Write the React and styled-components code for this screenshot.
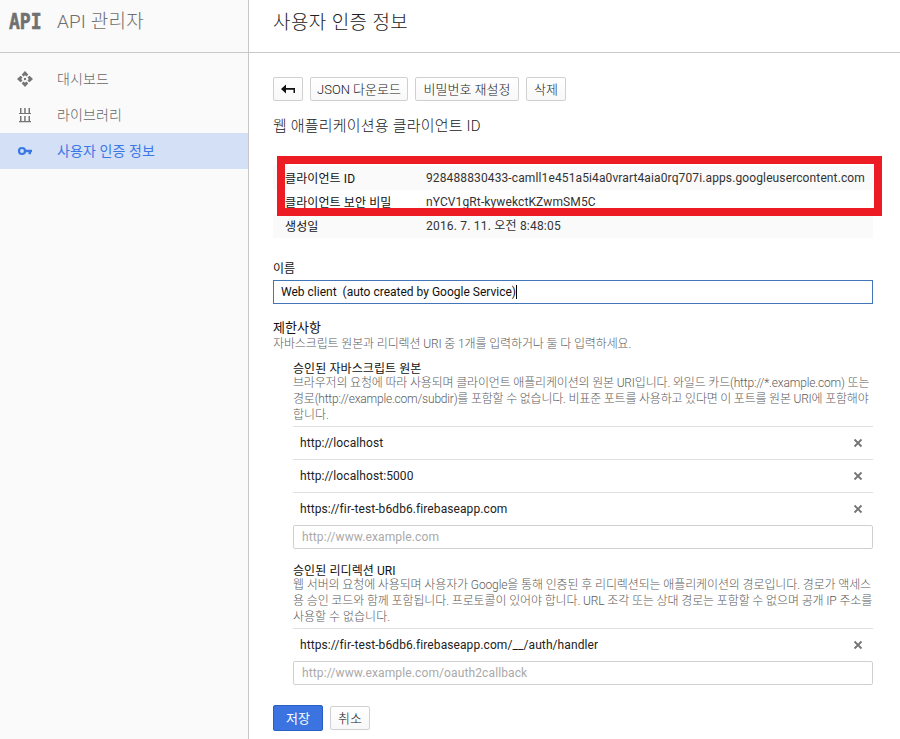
import React from 'react'
import styled, { createGlobalStyle } from 'styled-components'

const GlobalStyle = createGlobalStyle`
    * {
        box-sizing: border-box;
    }

    body {
        margin: 0;
        background: #fff;
        color: #212121;
        font-family: Roboto, "Noto Sans CJK KR", sans-serif;
        font-size: 12px;
        line-height: 16px;
        overflow: hidden;
    }
`

const Page = styled.div`
    display: flex;
    width: 900px;
    height: 739px;
`

const Sidebar = styled.div`
    width: 249px;
    flex: none;
    background: #fafafa;
    border-right: 1px solid #c8c8c8;
`

const Brand = styled.div`
    display: flex;
    align-items: center;
    height: 53px;
    padding: 0 0 8px 9px;
    border-bottom: 1px solid #c8c8c8;
`

const Logo = styled.span`
    width: 48px;
    font: bold 22px/22px "DejaVu Sans Mono", monospace;
    color: #707070;
    -webkit-text-stroke: 0.6px #707070;

    span {
        display: inline-block;
        transform: scaleX(0.82);
        transform-origin: left;
    }
`

const BrandName = styled.span`
    font-size: 19px;
    font-weight: 300;
    color: #6e6e6e;
    letter-spacing: 0.15px;
`

const Nav = styled.nav`
    padding-top: 8px;
`

const NavItem = styled.div`
    display: flex;
    align-items: center;
    height: 36px;
    padding-left: 16px;
    background: ${({ active }) => (active ? '#d3e0f6' : 'transparent')};
    color: ${({ active }) => (active ? '#3b78e7' : '#666')};
    font-size: 14px;
    font-weight: ${({ active }) => (active ? 400 : 300)};
    letter-spacing: 0.1px;

    svg {
        width: 18px;
        height: 18px;
        margin-right: 23px;
    }

    span {
        padding-bottom: 1px;
    }
`

const Main = styled.div`
    flex: 1;
    min-width: 0;
`

const Header = styled.div`
    display: flex;
    align-items: center;
    height: 53px;
    padding: 0 0 7px 24px;
    border-bottom: 1px solid #c8c8c8;
    font-size: 19px;
    font-weight: 300;
    letter-spacing: 0.4px;
`

const Content = styled.div`
    padding: 24px 27px 0 24px;
`

const Toolbar = styled.div`
    display: flex;
    align-items: center;
    gap: 7px;
`

const Button = styled.button`
    display: flex;
    align-items: center;
    justify-content: center;
    width: ${({ width }) => width}px;
    height: ${({ primary }) => (primary ? 26 : 24)}px;
    padding: 0 0 2px;
    border: 1px solid ${({ primary }) => (primary ? '#2a5fc4' : '#d0d0d0')};
    border-radius: 2px;
    background: ${({ primary }) => (primary ? '#3b74e0' : 'linear-gradient(#fff, #f8f8f8)')};
    color: ${({ primary }) => (primary ? '#fff' : '#212121')};
    font-family: inherit;
    font-size: 13px;
    font-weight: ${({ primary }) => (primary ? 400 : 300)};
    white-space: nowrap;

    svg {
        margin-top: 2px;
    }
`

const Title = styled.h2`
    margin: 17px 0 0;
    font-size: 15px;
    font-weight: 300;
    line-height: 16px;
    letter-spacing: 0.2px;
`

const Details = styled.div`
    position: relative;
    margin-top: 32px;
`

const DetailRow = styled.div`
    display: flex;
    align-items: center;
    height: 24px;
    padding-left: 12px;
    background: #fafafa;
    color: #333;

    &:nth-child(even) {
        background: #fff;
    }
`

const DetailLabel = styled.span`
    width: 141px;
    padding-top: 1px;
    color: #111;
    letter-spacing: 0.1px;
`

const DetailValue = styled.span`
    white-space: nowrap;
    letter-spacing: ${({ track }) => track || 0}px;
`

const Highlight = styled.div`
    position: absolute;
    top: -10px;
    left: 4px;
    width: 605px;
    height: 60px;
    border: 8px solid #ed1c24;
`

const Label = styled.div`
    margin-top: ${({ top }) => top}px;
    color: #111;
    font-size: ${({ size }) => size || 12}px;
`

const GroupLabel = styled.div`
    height: 14px;
    margin-top: ${({ top }) => top}px;
    color: #111;
    line-height: 17px;
    letter-spacing: 0.08px;
`

const Field = styled.div`
    display: flex;
    align-items: center;
    height: 24px;
    margin-top: ${({ top }) => top || 0}px;
    padding-left: ${({ focused }) => (focused ? 7 : 8)}px;
    border: 1px solid ${({ focused }) => (focused ? '#4376b8' : '#d0d0d0')};
    border-radius: ${({ focused }) => (focused ? 0 : 2)}px;
    color: ${({ focused }) => (focused ? '#111' : '#a9a9a9')};
    letter-spacing: ${({ track }) => track || 0}px;
    white-space: pre;
`

const Caret = styled.span`
    width: 1px;
    height: 14px;
    background: #000;
`

const Hint = styled.div`
    color: #5c5c5c;
    font-weight: 300;
`

const Line = styled.div`
    height: 16px;
    white-space: nowrap;
    letter-spacing: ${({ track }) => track || 0}px;
`

const Group = styled.div`
    padding-left: 20px;
`

const List = styled.div`
    margin-top: 3px;
`

const UriRow = styled.div`
    display: flex;
    align-items: center;
    justify-content: space-between;
    height: 33px;
    padding: 0 10px 0 7px;
    border-top: 1px solid #e0e0e0;
    letter-spacing: 0.09px;
`

const Actions = styled.div`
    display: flex;
    align-items: center;
    gap: 7px;
    margin-top: 20px;
`

function DashboardIcon() {
    return (
        <svg viewBox="0 0 18 18" fill="#757575">
            <path d="M6 4.200L9 1l3 3.200V5L10.500 6.500 9 5.200 7.500 6.500 6 5z" />
            <path d="M13.800 6L17 9l-3.200 3H13l-1.500-1.500L12.800 9l-1.300-1.500L13 6z" />
            <path d="M12 13.800L9 17l-3-3.200V13l1.500-1.500L9 12.800l1.500-1.300L12 13z" />
            <path d="M4.200 12L1 9l3.200-3H5l1.500 1.500L5.200 9l1.300 1.500L5 12z" />
            <circle cx="9" cy="9" r="1.200" />
        </svg>
    )
}

function LibraryIcon() {
    return (
        <svg viewBox="0 0 18 18" fill="#757575">
            <path d="M3 7h12v1H3zM4 2h1.500v5H4zM8.200 2h1.500v5H8.200zM12.500 2H14v5h-1.500z" />
            <path d="M3 15h12v1.300H3zM4 10h1.500v5H4zM8.200 10h1.500v5H8.200zM12.500 10H14v5h-1.500z" />
        </svg>
    )
}

function KeyIcon() {
    return (
        <svg viewBox="0 0 18 18" fill="none" stroke="#3b78e7">
            <circle cx="6" cy="9" r="3" strokeWidth="2.200" />
            <path d="M9 9h7M13.800 9v3.200" strokeWidth="2.400" />
        </svg>
    )
}

function BackIcon() {
    return (
        <svg width="14" height="10" viewBox="0 0 14 10" fill="#111">
            <path d="M0 5l5-4.500V4h9v5h-1.500V5.700H5v3.800z" />
        </svg>
    )
}

function CloseIcon() {
    return (
        <svg width="10" height="10" viewBox="0 0 10 10" stroke="#757575" strokeWidth="1.8">
            <path d="M1.500 1.500l7 7M8.500 1.500l-7 7" />
        </svg>
    )
}

function Uri({ children }) {
    return (
        <UriRow>
            <span>{children}</span>
            <CloseIcon />
        </UriRow>
    )
}

function App() {
    return (
        <Page lang="ko">
            <GlobalStyle />
            <Sidebar>
                <Brand>
                    <Logo><span>API</span></Logo>
                    <BrandName>API 관리자</BrandName>
                </Brand>
                <Nav>
                    <NavItem><DashboardIcon /><span>대시보드</span></NavItem>
                    <NavItem><LibraryIcon /><span>라이브러리</span></NavItem>
                    <NavItem active><KeyIcon /><span>사용자 인증 정보</span></NavItem>
                </Nav>
            </Sidebar>
            <Main>
                <Header>사용자 인증 정보</Header>
                <Content>
                    <Toolbar>
                        <Button width={30}><BackIcon /></Button>
                        <Button width={98}>JSON 다운로드</Button>
                        <Button width={104}>비밀번호 재설정</Button>
                        <Button width={40}>삭제</Button>
                    </Toolbar>
                    <Title>웹 애플리케이션용 클라이언트 ID</Title>
                    <Details>
                        <DetailRow>
                            <DetailLabel>클라이언트 ID</DetailLabel>
                            <DetailValue track={0.12}>928488830433-camll1e451a5i4a0vrart4aia0rq707i.apps.googleusercontent.com</DetailValue>
                        </DetailRow>
                        <DetailRow>
                            <DetailLabel>클라이언트 보안 비밀</DetailLabel>
                            <DetailValue track={0.12}>nYCV1gRt-kywekctKZwmSM5C</DetailValue>
                        </DetailRow>
                        <DetailRow>
                            <DetailLabel>생성일</DetailLabel>
                            <DetailValue track={0.2}>2016. 7. 11. 오전 8:48:05</DetailValue>
                        </DetailRow>
                        <Highlight />
                    </Details>
                    <Label top={23}>이름</Label>
                    <Field focused top={3}>Web client  (auto created by Google Service)<Caret /></Field>
                    <Label top={16} size={13}>제한사항</Label>
                    <Hint>
                        <Line track={-0.13}>자바스크립트 원본과 리디렉션 URI 중 1개를 입력하거나 둘 다 입력하세요.</Line>
                    </Hint>
                    <Group>
                        <GroupLabel top={9}>승인된 자바스크립트 원본</GroupLabel>
                        <Hint>
                            <Line track={-0.17}>브라우저의 요청에 따라 사용되며 클라이언트 애플리케이션의 원본 URI입니다. 와일드 카드(http://*.example.com) 또는</Line>
                            <Line track={-0.2}>경로(http://example.com/subdir)를 포함할 수 없습니다. 비표준 포트를 사용하고 있다면 이 포트를 원본 URI에 포함해야</Line>
                            <Line>합니다.</Line>
                        </Hint>
                        <List>
                            <Uri>http://localhost</Uri>
                            <Uri>http://localhost:5000</Uri>
                            <Uri>https://fir-test-b6db6.firebaseapp.com</Uri>
                        </List>
                        <Field track={0.12}>http://www.example.com</Field>
                        <GroupLabel top={14}>승인된 리디렉션 URI</GroupLabel>
                        <Hint>
                            <Line track={-0.12}>웹 서버의 요청에 사용되며 사용자가 Google을 통해 인증된 후 리디렉션되는 애플리케이션의 경로입니다. 경로가 액세스</Line>
                            <Line track={-0.12}>용 승인 코드와 함께 포함됩니다. 프로토콜이 있어야 합니다. URL 조각 또는 상대 경로는 포함할 수 없으며 공개 IP 주소를</Line>
                            <Line>사용할 수 없습니다.</Line>
                        </Hint>
                        <List>
                            <Uri>https://fir-test-b6db6.firebaseapp.com/__/auth/handler</Uri>
                        </List>
                        <Field track={0.12}>http://www.example.com/oauth2callback</Field>
                    </Group>
                    <Actions>
                        <Button primary width={50}>저장</Button>
                        <Button width={40}>취소</Button>
                    </Actions>
                </Content>
            </Main>
        </Page>
    )
}

export default App
